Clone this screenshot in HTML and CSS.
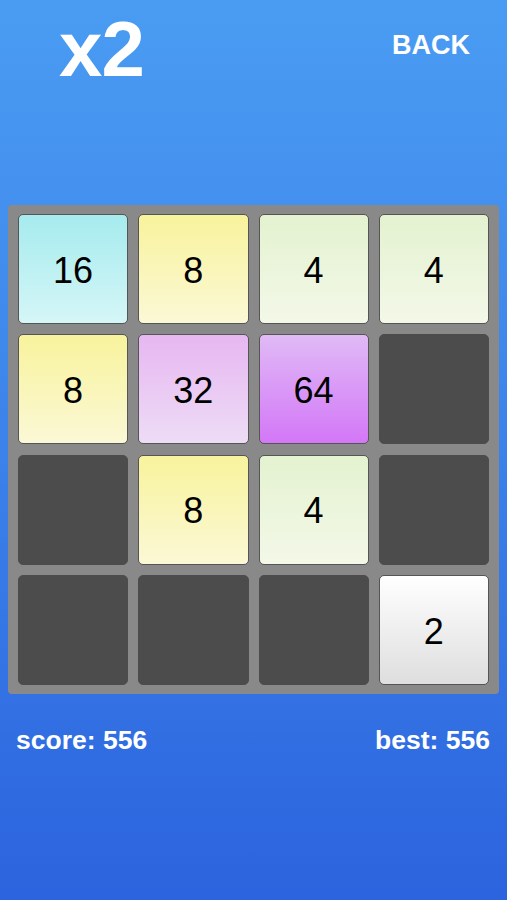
FILE: index.html
```html
<!DOCTYPE html>
<html lang="en">
<head>
    <meta charset="UTF-8">
    <meta name="viewport" content="width=device-width, initial-scale=1.0">
    <title>x2</title>
    <link rel="stylesheet" href="styles.css">
</head>
<body>
<div class="top-bar">
    <span class="logo">x2</span>
    <span class="back">BACK</span>
</div>

<!-- Game board -->
<div class="board">
    <div class="tile t16">16</div>
    <div class="tile t8">8</div>
    <div class="tile t4">4</div>
    <div class="tile t4">4</div>

    <div class="tile t8">8</div>
    <div class="tile t32">32</div>
    <div class="tile t64">64</div>
    <div class="tile empty"></div>

    <div class="tile empty"></div>
    <div class="tile t8">8</div>
    <div class="tile t4">4</div>
    <div class="tile empty"></div>

    <div class="tile empty"></div>
    <div class="tile empty"></div>
    <div class="tile empty"></div>
    <div class="tile t2">2</div>
</div>

<div class="scores">
    <span>score: 556</span>
    <span>best: 556</span>
</div>
</body>
</html>
```

FILE: styles.css
```css
html, body {
    height: 100%;
    margin: 0;
    overflow: hidden;
}

body {
    background: linear-gradient(to bottom, #4a9cf2 0%, #3b82ea 50%, #2c63de 100%);
    font-family: "Liberation Sans", Arial, Helvetica, sans-serif;
    color: #fff;
}

.top-bar {
    display: flex;
    justify-content: space-between;
    align-items: center;
    height: 100px;
    padding: 0 37px 0 59px;
}

.logo {
    font-size: 78px;
    font-weight: bold;
    letter-spacing: -1px;
    margin-top: -2px;
}

.back {
    font-size: 27px;
    font-weight: bold;
    margin-top: -9px;
}

/* 4x4 grid */
.board {
    margin: 105px 8px 0 8px;
    padding: 9px 10px 9px 10px;
    background-color: #898989;
    border-radius: 4px;
    display: grid;
    grid-template-columns: repeat(4, 1fr);
    grid-auto-rows: 110px;
    row-gap: 10.4px;
    column-gap: 10px;
}

.tile {
    border: 1px solid #555;
    border-radius: 5px;
    display: flex;
    justify-content: center;
    align-items: center;
    padding-top: 3px;
    font-size: 36px;
    color: #000;
}

.empty {
    background-color: #4c4c4c;
    border-color: #4c4c4c;
}

.t2 {
    background: linear-gradient(to bottom, #ffffff, #dedede);
}

.t4 {
    background: linear-gradient(to bottom, #e4f2d0, #f3f8e8);
}

.t8 {
    background: linear-gradient(to bottom, #f8f39c, #fbf8d6);
}

.t16 {
    background: linear-gradient(to bottom, #a6ebee, #d5f6f7);
}

.t32 {
    background: linear-gradient(to bottom, #e7b7f1, #eddcf6);
}

.t64 {
    background: linear-gradient(to bottom, #e0baf6, #d377f7);
}

.scores {
    display: flex;
    justify-content: space-between;
    padding: 31px 17px 0 16px;
    font-size: 26.5px;
    font-weight: bold;
}
```
